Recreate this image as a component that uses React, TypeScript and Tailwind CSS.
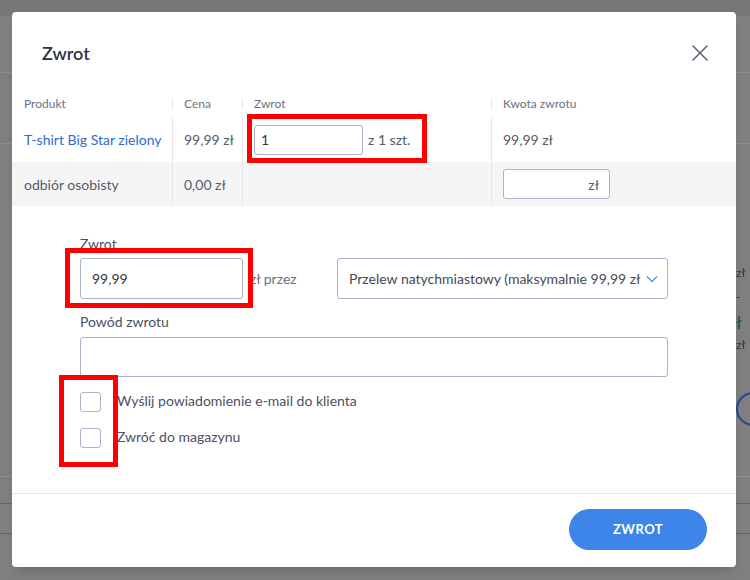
import React from 'react';

const font = { fontFamily: 'Lato, "Open Sans", sans-serif' };

function HeaderCell({ label, className, divider = true }: { label: string; className: string; divider?: boolean }) {
  return (
    <div className={`flex h-full items-center ${className}`}>
      {divider && <div className="h-[11px] w-px bg-[#e3e5ea]" />}
      <span className={divider ? 'pl-[11px]' : 'pl-[12px]'}>{label}</span>
    </div>
  );
}

function Checkbox({ label }: { label: string }) {
  return (
    <label className="flex h-[20px] items-center">
      <span className="h-[20px] w-[21px] rounded-[3px] border border-[#a9b3cb] bg-white" />
      <span className="ml-[16px] pb-[3px] text-[14px] text-[#4b5162]">{label}</span>
    </label>
  );
}

export default function App() {
  return (
    <div className="relative h-[580px] w-[750px] overflow-hidden bg-[#808080]" style={font}>
      {/* page behind the overlay */}
      <div className="flex h-full flex-col">
        <div className="h-[16px] bg-[#777777]" />
        <div className="mt-[56px] h-px bg-[#8e8e8e]" />
        <div className="mt-[70px] h-px bg-[#8e8e8e]" />
        <div className="flex flex-1 justify-end">
          <div className="mt-[122px] flex w-[14px] flex-col items-start text-[12px] leading-[14px] text-[#3a3a3a]">
            <span>zł</span>
            <span className="mt-[10px]">-</span>
            <span className="mt-[8px] text-[18px] leading-[20px] text-[#1f5a55]">ł</span>
            <span className="mt-[6px]">zł</span>
            <span className="mt-[40px] h-[34px] w-[34px] rounded-full border-2 border-[#23489a]" />
          </div>
        </div>
        <div className="h-px bg-[#8e8e8e]" />
        <div className="mt-[26px] h-px bg-[#5d6380]" />
        <div className="mt-[29px] h-px bg-[#5d6380]" />
        <div className="h-[46px]" />
      </div>

      {/* modal */}
      <div className="absolute left-[12px] top-[12px] flex h-[555px] w-[724px] flex-col rounded-[4px] bg-white shadow-lg">
        <div className="flex h-[82px] items-center justify-between pl-[30px] pr-[28px]">
          <h2 className="text-[18px] font-semibold text-[#2d3241]">Zwrot</h2>
          <svg width="16" height="16" viewBox="0 0 16 16" fill="none" stroke="#5a6273" strokeWidth="1.5" strokeLinecap="round">
            <path d="M1 1L15 15M15 1L1 15" />
          </svg>
        </div>

        {/* table */}
        <div className="flex h-[23px] pb-[4px] text-[12px] text-[#6b7180]">
          <HeaderCell label="Produkt" className="w-[160px]" divider={false} />
          <HeaderCell label="Cena" className="w-[70px]" />
          <HeaderCell label="Zwrot" className="w-[249px]" />
          <HeaderCell label="Kwota zwrotu" className="flex-1" />
        </div>
        <div className="flex h-[45px] text-[14px] text-[#555c6c]">
          <div className="flex w-[160px] items-center pl-[12px] text-[#2d6bd3]">T-shirt Big Star zielony</div>
          <div className="flex w-[70px] items-center border-l border-[#e7e7ea] pl-[11px]">99,99 zł</div>
          <div className="flex w-[249px] items-center border-l border-[#e7e7ea] pl-[11px]">
            <div className="flex h-[30px] w-[109px] items-center rounded-[3px] border border-[#a9b3cb] px-[6px] text-[#333845]">1</div>
            <span className="ml-[5px]">z 1 szt.</span>
          </div>
          <div className="flex flex-1 items-center border-l border-[#e7e7ea] pl-[11px]">99,99 zł</div>
        </div>
        <div className="flex h-[44px] bg-[#f5f5f6] text-[14px] text-[#555c6c]">
          <div className="flex w-[160px] items-center pl-[12px]">odbiór osobisty</div>
          <div className="flex w-[70px] items-center border-l border-[#e7e7ea] pl-[11px]">0,00 zł</div>
          <div className="w-[249px] border-l border-[#e7e7ea]" />
          <div className="flex flex-1 items-center border-l border-[#e7e7ea] pl-[11px]">
            <div className="flex h-[30px] w-[107px] items-center justify-end rounded-[3px] border border-[#a9b3cb] bg-white pr-[10px]">zł</div>
          </div>
        </div>

        {/* form */}
        <div className="flex flex-1 flex-col px-[68px] pt-[29px] text-[14px] text-[#4b5162]">
          <div className="h-[23px] leading-[18px]">Zwrot</div>
          <div className="flex h-[41px] items-center">
            <div className="flex h-full w-[163px] items-center rounded-[3px] border border-[#a9b3cb] px-[11px] text-[#333845]">99,99</div>
            <span className="w-[94px] pl-[7px] text-[#6b7180]">zł przez</span>
            <div className="flex h-full flex-1 items-center justify-between overflow-hidden rounded-[3px] border border-[#a9b3cb] pl-[11px] pr-[9px]">
              <span className="whitespace-nowrap text-[14px] text-[#444a59]">Przelew natychmiastowy (maksymalnie 99,99 zł</span>
              <svg className="ml-[6px] shrink-0" width="12" height="8" viewBox="0 0 12 8" fill="none" stroke="#5b8de8" strokeWidth="1.3">
                <path d="M1 1.5L6 6.5L11 1.5" />
              </svg>
            </div>
          </div>
          <div className="mb-[6px] mt-[14px] leading-[18px]">Powód zwrotu</div>
          <div className="h-[40px] rounded-[3px] border border-[#a9b3cb]" />
          <div className="mt-[15px] flex flex-col gap-[16px]">
            <Checkbox label="Wyślij powiadomienie e-mail do klienta" />
            <Checkbox label="Zwróć do magazynu" />
          </div>
        </div>

        <div className="flex h-[74px] justify-end border-t border-[#e8e8ea] pr-[29px] pt-[15px]">
          <button className="h-[41px] w-[138px] rounded-full bg-[#3d85e8] text-[13px] font-bold tracking-[0.5px] text-white">ZWROT</button>
        </div>
      </div>

      {/* annotation boxes */}
      <div className="pointer-events-none absolute left-[247px] top-[114px] h-[49px] w-[180px] border-[5px] border-[#ff0000]" />
      <div className="pointer-events-none absolute left-[65px] top-[248px] h-[60px] w-[188px] border-[5px] border-[#ff0000]" />
      <div className="pointer-events-none absolute left-[59px] top-[375px] h-[92px] w-[59px] border-[5px] border-[#ff0000]" />
    </div>
  );
}
